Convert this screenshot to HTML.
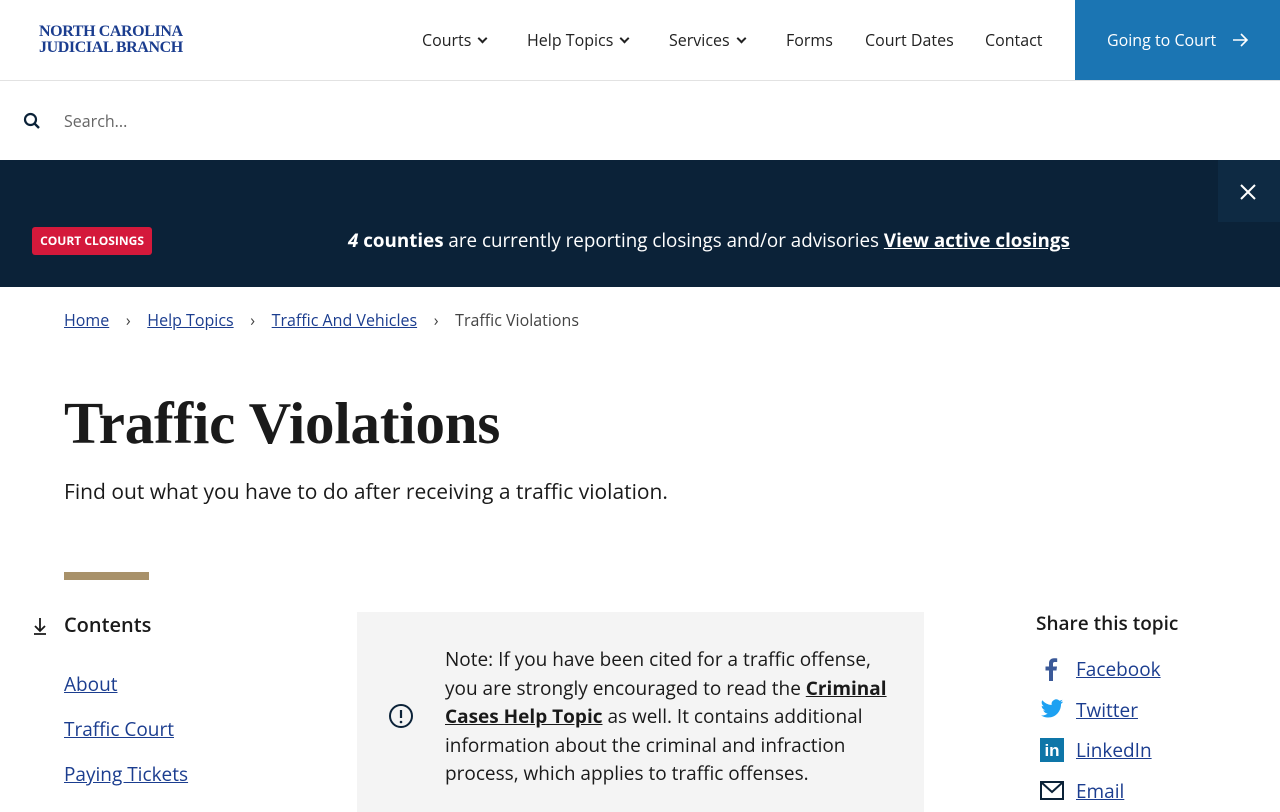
<!DOCTYPE html>
<html><head><meta charset="utf-8"><style>
*{box-sizing:border-box;margin:0;padding:0}
body{width:1280px;height:800px;overflow:hidden;background:#fff;font-family:"Open Sans","Liberation Sans",sans-serif;color:#1a1a1a;position:relative}
.abs{position:absolute}
a{color:#1b3d8f;text-decoration:underline}
.nav{font-size:16px;color:#222;top:29px;white-space:nowrap}
.chev{display:inline-block;width:7px;height:7px;border-right:2px solid #222;border-bottom:2px solid #222;transform:rotate(45deg);margin-left:8px;position:relative;top:-4px}
</style></head><body>
<div class="abs" style="left:39px;top:24px;font-family:'Liberation Serif',serif;font-weight:bold;color:#1b3d8f;font-size:16px;line-height:15.5px;letter-spacing:-0.4px">NORTH CAROLINA<br>JUDICIAL BRANCH</div>
<div class="abs nav" style="left:422px">Courts<span class="chev"></span></div>
<div class="abs nav" style="left:527px">Help Topics<span class="chev"></span></div>
<div class="abs nav" style="left:669px">Services<span class="chev"></span></div>
<div class="abs nav" style="left:786px">Forms</div>
<div class="abs nav" style="left:865px">Court Dates</div>
<div class="abs nav" style="left:985px">Contact</div>
<div class="abs" style="left:1075px;top:0;width:205px;height:80px;background:#1b75b3;color:#fff;font-size:16px;padding:29px 0 0 32px">Going to Court</div>
<svg class="abs" style="left:1232px;top:33px" width="16" height="14"><path d="M1 7H15M9 1L15 7L9 13" stroke="#fff" stroke-width="1.6" fill="none"/></svg>
<div class="abs" style="left:0;top:80px;width:1280px;height:1px;background:#e2e2e2"></div>
<svg class="abs" style="left:23px;top:112px" width="18" height="18" viewBox="0 0 18 18"><circle cx="7.5" cy="7.5" r="5.5" fill="none" stroke="#0b2238" stroke-width="2.2"/><line x1="11.5" y1="11.5" x2="16" y2="16" stroke="#0b2238" stroke-width="2.4"/></svg>
<div class="abs" style="left:64px;top:110px;font-size:16px;color:#666">Search...</div>
<div class="abs" style="left:0;top:160px;width:1280px;height:127px;background:#0b2238"></div>
<div class="abs" style="left:1218px;top:160px;width:62px;height:62px;background:#0e2a43"></div>
<svg class="abs" style="left:1239px;top:183px" width="18" height="18"><path d="M2 2L16 16M16 2L2 16" stroke="#fff" stroke-width="2"/></svg>
<div class="abs" style="left:32px;top:227px;width:120px;height:28px;background:#d4193b;border-radius:3px;color:#fff;font-size:12px;font-weight:bold;text-align:center;line-height:28px">COURT CLOSINGS</div>
<div class="abs" style="left:348px;top:227px;font-size:18.8px;color:#fff;white-space:nowrap"><b><i>4</i> counties</b> are currently reporting closings and/or advisories <b style="text-decoration:underline">View active closings</b></div>
<div class="abs" style="left:64px;top:309px;font-size:16px;color:#444;white-space:nowrap"><a href="#">Home</a>&nbsp;&nbsp;&nbsp;&nbsp;›&nbsp;&nbsp;&nbsp;&nbsp;<a href="#">Help Topics</a>&nbsp;&nbsp;&nbsp;&nbsp;›&nbsp;&nbsp;&nbsp;&nbsp;<a href="#">Traffic And Vehicles</a>&nbsp;&nbsp;&nbsp;&nbsp;›&nbsp;&nbsp;&nbsp;&nbsp;Traffic Violations</div>
<div class="abs" style="left:64px;top:389px;font-family:'Liberation Serif',serif;font-weight:bold;font-size:59px;color:#1a1a1a;letter-spacing:-0.2px">Traffic Violations</div>
<div class="abs" style="left:64px;top:478px;font-size:21px">Find out what you have to do after receiving a traffic violation.</div>
<div class="abs" style="left:64px;top:572px;width:85px;height:8px;background:#a8916a"></div>
<svg class="abs" style="left:32px;top:617px" width="16" height="18"><path d="M8 1V14M3 9L8 14L13 9M2 17H14" stroke="#1a1a1a" stroke-width="1.8" fill="none"/></svg>
<div class="abs" style="left:64px;top:611px;font-size:20px;font-weight:600">Contents</div>
<div class="abs" style="left:64px;top:662px;font-size:19px;line-height:45px"><a href="#">About</a><br><a href="#">Traffic Court</a><br><a href="#">Paying Tickets</a></div>
<div class="abs" style="left:357px;top:612px;width:567px;height:200px;background:#f4f4f4"></div>
<svg class="abs" style="left:388px;top:703px" width="26" height="26"><circle cx="13" cy="13" r="11" fill="none" stroke="#0b2238" stroke-width="2"/><path d="M13 7V15" stroke="#0b2238" stroke-width="2.2"/><circle cx="13" cy="19" r="1.3" fill="#0b2238"/></svg>
<div class="abs" style="left:445px;top:645px;width:445px;font-size:19px;line-height:28.6px">Note: If you have been cited for a traffic offense, you are strongly encouraged to read the <b style="text-decoration:underline">Criminal Cases Help Topic</b> as well. It contains additional information about the criminal and infraction process, which applies to traffic offenses.</div>
<div class="abs" style="left:1036px;top:610px;font-size:19px;font-weight:600">Share this topic</div>
<div class="abs" style="left:1076px;top:649px;font-size:19px;line-height:40.5px"><a href="#">Facebook</a><br><a href="#">Twitter</a><br><a href="#">LinkedIn</a><br><a href="#">Email</a></div>
<svg class="abs" style="left:1043px;top:657px" width="16" height="24" viewBox="0 0 16 24"><path d="M10 24V13.5H13.5L14 9.5H10V7c0-1.2.3-2 2-2h2.2V1.4C13.8 1.3 12.5 1.2 11 1.2 8 1.2 6 3 6 6.3V9.5H2.5V13.5H6V24z" fill="#3b5998"/></svg>
<svg class="abs" style="left:1040px;top:699px" width="24" height="20" viewBox="0 0 24 20"><path d="M23 2.5c-.8.4-1.7.6-2.6.7.9-.6 1.6-1.4 2-2.5-.9.5-1.9.9-2.9 1.1A4.6 4.6 0 0 0 11.7 6 13 13 0 0 1 2.3 1.2a4.6 4.6 0 0 0 1.4 6.1c-.7 0-1.4-.2-2-.6 0 2.2 1.6 4.1 3.7 4.5-.7.2-1.4.2-2.1.1.6 1.8 2.3 3.2 4.3 3.2A9.2 9.2 0 0 1 1 16.4 13 13 0 0 0 8 18.5c8.5 0 13-7 13-13v-.6c.9-.6 1.6-1.4 2-2.4z" fill="#1da1f2"/></svg>
<div class="abs" style="left:1040px;top:738px;width:24px;height:24px;background:#0e76a8;color:#fff;font-family:'Liberation Sans';font-weight:bold;font-size:17px;line-height:26px;text-align:center">in</div>
<svg class="abs" style="left:1040px;top:781px" width="24" height="19"><rect x="1" y="1" width="22" height="17" fill="none" stroke="#0b2238" stroke-width="2"/><path d="M1 1L12 11L23 1" fill="none" stroke="#0b2238" stroke-width="2"/></svg>
</body></html>
